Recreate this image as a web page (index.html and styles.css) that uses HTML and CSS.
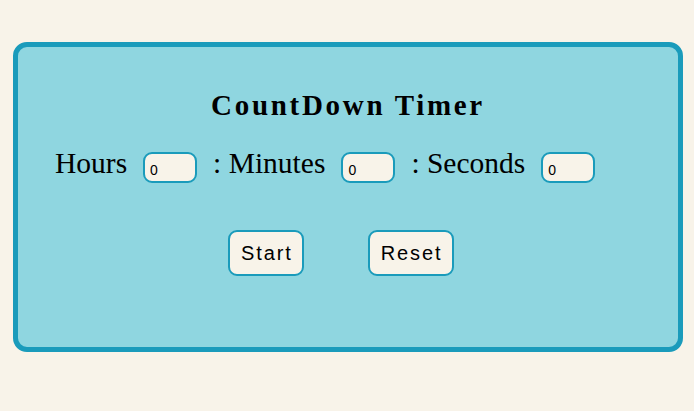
FILE: index.html
```html
<!DOCTYPE html>
<html>
<head>
<meta charset="utf-8">
<link rel="stylesheet" href="styles.css">
</head>
<body>
<div class="card">
  <h1 class="title">CountDown Timer</h1>
  <div class="row">
    <span class="label">Hours</span>
    <input class="field" type="text" value="0">
    <span class="label">: Minutes</span>
    <input class="field" type="text" value="0">
    <span class="label">: Seconds</span>
    <input class="field" type="text" value="0">
  </div>
  <div class="buttons">
    <button class="btn">Start</button>
    <button class="btn">Reset</button>
  </div>
</div>
</body>
</html>
```
FILE: styles.css
```css
html, body {
  margin: 0;
  padding: 0;
  background: #f8f3e9;
}
body {
  font-family: "Liberation Serif", "Times New Roman", serif;
  width: 694px;
  height: 411px;
  overflow: hidden;
}
.card {
  box-sizing: border-box;
  margin: 42px 0 0 13px;
  width: 670px;
  height: 310px;
  background: #8fd6e0;
  border: 5px solid #1a9bbb;
  border-radius: 14px;
  padding: 0 0 0 37px;
}
.title {
  margin: 43px 0 0 -37px;
  text-align: center;
  font-size: 29px;
  font-weight: bold;
  letter-spacing: 2.7px;
  line-height: 30px;
  color: #000;
}
.row {
  display: flex;
  align-items: center;
  gap: 16px;
  margin-top: 30px;
  height: 34px;
}
.label {
  font-size: 29.5px;
  line-height: 34px;
  margin-bottom: 8px;
  color: #000;
  white-space: nowrap;
}
.field {
  box-sizing: border-box;
  width: 54px;
  height: 31px;
  border: 2px solid #1a9bbb;
  border-radius: 9px;
  background: #f8f3e9;
  font-family: "Liberation Sans", Arial, sans-serif;
  font-size: 14px;
  padding: 6px 0 0 5px;
  color: #000;
  outline: none;
}
.buttons {
  display: flex;
  gap: 64px;
  margin-top: 46px;
  padding-left: 173px;
}
.btn {
  box-sizing: border-box;
  height: 46px;
  padding: 0 9px 0 11px;
  border: 2px solid #1a9bbb;
  border-radius: 9px;
  background: #f8f3e9;
  font-family: "Liberation Sans", Arial, sans-serif;
  font-size: 20px;
  letter-spacing: 1.9px;
  color: #000;
}
```
